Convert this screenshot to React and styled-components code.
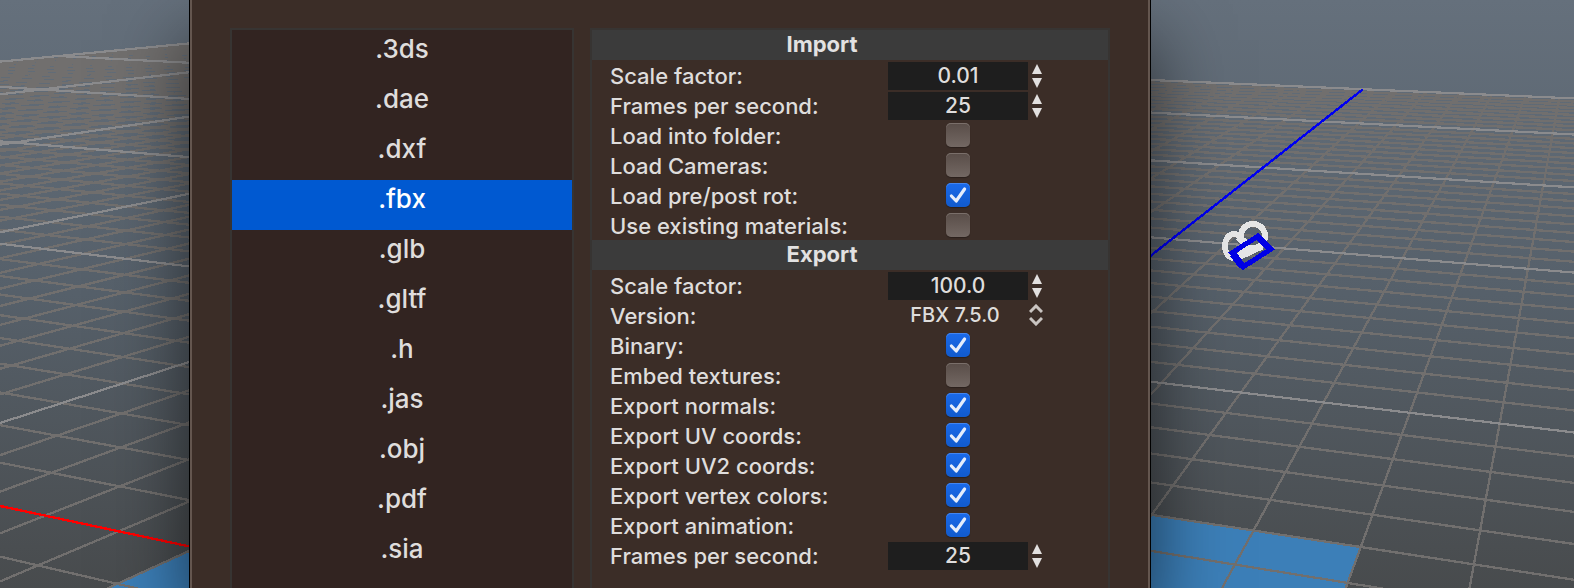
import styled, { createGlobalStyle } from "styled-components";
import { useState } from "react";

const GlobalStyle = createGlobalStyle`
  * {
    box-sizing: border-box;
  }
  body {
    margin: 0;
    background-color: #4a4d50;
    font-family: Inter, "Liberation Sans", sans-serif;
    font-weight: 500;
  }
`;

const Page = styled.div`
  position: relative;
  height: 100vh;
  overflow: hidden;
  display: grid;
  grid-template-columns: 189fr 962fr 423fr;
`;

const Viewport = styled.svg`
  position: absolute;
  inset: 0;
  width: 100%;
  height: 100%;
`;

const Window = styled.main`
  grid-column: 2;
  position: relative;
  min-height: 100vh;
  padding: 28px 40px 0px;
  display: grid;
  grid-template-columns: 344fr 520fr;
  gap: 16px;
  background-color: #3b2d27;
  border: solid #000;
  border-width: 0px 1px;
  box-shadow: inset 2px 0px #64564f, inset -2px 0px #64564f,
    0px 40px 72px 0px rgba(0, 0, 0, 0.6);
`;

const FormatList = styled.div`
  display: flex;
  flex-direction: column;
  background-color: #322421;
  border: 2px solid #373432;
  border-bottom: none;
`;

const Format = styled.button`
  height: 50px;
  padding: 0px 0px 12px;
  border: none;
  background-color: ${(props) => (props.$selected ? "#0059d1" : "transparent")};
  color: ${(props) => (props.$selected ? "#ffffff" : "#dfdddc")};
  font-family: inherit;
  font-size: 26px;
  font-weight: inherit;
  line-height: 38px;
  cursor: pointer;
`;

const Options = styled.form`
  border: 2px solid #373432;
  border-bottom: none;
`;

const Title = styled.h2`
  margin: 0px;
  padding: 0px 56px 2px 0px;
  background-color: #3b3b3b;
  color: #e2e1e1;
  font-size: 22px;
  font-weight: 700;
  line-height: 28px;
  text-align: center;
`;

const Row = styled.div`
  height: 30px;
  display: grid;
  grid-template-columns: 296fr 140fr 80fr;
  align-items: center;
`;

const Label = styled.label`
  padding: 2px 0px 0px 18px;
  color: #dfdddc;
  font-size: 22px;
  line-height: 28px;
  white-space: nowrap;
`;

const Input = styled.input`
  width: 100%;
  height: 28px;
  margin-top: 2px;
  padding: 0px 0px 2px;
  border: none;
  outline: none;
  background-color: #1e1e1e;
  color: #dfdddc;
  font-family: inherit;
  font-size: 21px;
  font-weight: inherit;
  text-align: center;
`;

const Select = styled.select`
  width: 100%;
  height: 28px;
  padding: 0px 6px 0px 0px;
  appearance: none;
  border: none;
  outline: none;
  background-color: transparent;
  color: #dfdddc;
  font-family: inherit;
  font-size: 20px;
  font-weight: inherit;
  text-align: center;
  text-align-last: center;
`;

const Stepper = styled.div`
  width: 10px;
  margin: 2px 0px 0px 4px;
  display: flex;
  flex-direction: column;
  gap: 4px;
`;

const Step = styled.button`
  height: 10px;
  padding: 0px;
  border: none;
  background: none;
  display: flex;
  cursor: pointer;
`;

const Chevrons = styled.svg`
  margin-left: 1px;
  pointer-events: none;
`;

const CheckBox = styled.span`
  position: relative;
  width: 24px;
  height: 24px;
  justify-self: center;
`;

const Check = styled.input`
  width: 24px;
  height: 24px;
  margin: 0px;
  display: block;
  appearance: none;
  border-radius: 5px;
  background: linear-gradient(#594d48, #736863);
  box-shadow: inset 0px 1px #7a6f6a, 0px 1px 1px rgba(0, 0, 0, 0.3);
  cursor: pointer;

  &:checked {
    background: linear-gradient(#1a6aea, #115acc);
    box-shadow: inset 0px 1px #4385ee, 0px 1px 1px rgba(0, 0, 0, 0.3);
  }
`;

const Tick = styled.svg`
  position: absolute;
  inset: 0;
  pointer-events: none;
`;

const formats = [
  ".3ds",
  ".dae",
  ".dxf",
  ".fbx",
  ".glb",
  ".gltf",
  ".h",
  ".jas",
  ".obj",
  ".pdf",
  ".sia",
];

const importOptions = [
  { label: "Scale factor:", type: "number", value: 0.01, digits: 2 },
  { label: "Frames per second:", type: "number", value: 25, digits: 0 },
  { label: "Load into folder:", type: "check" },
  { label: "Load Cameras:", type: "check" },
  { label: "Load pre/post rot:", type: "check", value: true },
  { label: "Use existing materials:", type: "check" },
];

const exportOptions = [
  { label: "Scale factor:", type: "number", value: 100, digits: 1 },
  { label: "Version:", type: "select", options: ["FBX 7.5.0"] },
  { label: "Binary:", type: "check", value: true },
  { label: "Embed textures:", type: "check" },
  { label: "Export normals:", type: "check", value: true },
  { label: "Export UV coords:", type: "check", value: true },
  { label: "Export UV2 coords:", type: "check", value: true },
  { label: "Export vertex colors:", type: "check", value: true },
  { label: "Export animation:", type: "check", value: true },
  { label: "Frames per second:", type: "number", value: 25, digits: 0 },
];

// two point perspective: both families of floor lines end on the horizon
const horizon = -92;
const leftVanish = -2800;
const rightVanish = 1594;

const across = (n) => 22.97 - 0.36575 * n;
const along = (n) => 10.375 - 0.182 * n;

const cross = (a, b) => {
  const depth = (rightVanish - leftVanish) / (across(a) + along(b));
  return [rightVanish - along(b) * depth, horizon + depth];
};

const acrossLine = (n) => {
  const [x, y] = cross(n, 0);
  return `M${x} ${y}L1700 ${horizon + (1700 - leftVanish) / across(n)}`;
};

const alongLine = (n) => {
  const [x, y] = cross(0, n);
  return `M${x} ${y}L${rightVanish - along(n) * 792} 700`;
};

const range = (count) => [...Array(count).keys()];
const minor = (n) => n % 10 !== 0;
const major = (n) => n % 10 === 0 && n !== 50;

const lines = (test) =>
  range(60).filter(test).map(acrossLine).join("") +
  range(58).filter(test).map(alongLine).join("");

const tile = [cross(45, 45), cross(45, 55), cross(55, 55), cross(55, 45)];

const Floor = () => (
  <Viewport viewBox="0 0 1574 588" preserveAspectRatio="xMidYMid slice">
    <defs>
      <linearGradient id="sky" x1="0" y1="0" x2="0" y2="1">
        <stop offset="0" stopColor="#65707c" />
        <stop offset="0.5" stopColor="#56606a" />
        <stop offset="1" stopColor="#484b4d" />
      </linearGradient>
    </defs>
    <rect width="1574" height="588" fill="url(#sky)" />
    <polygon points={tile.join(" ")} fill="#3c7fb8" />
    <g fill="none" shapeRendering="crispEdges">
      <path d={lines(minor)} stroke="#716f6e" strokeWidth="2.3" />
      <path d={lines(major)} stroke="#8b8b8d" strokeWidth="2.2" />
      <path d={acrossLine(50)} stroke="#ff0000" strokeWidth="2.4" />
      <path d={alongLine(50)} stroke="#0000f0" strokeWidth="2.4" />
    </g>
    <g fill="none" shapeRendering="crispEdges">
      <ellipse
        cx="1234"
        cy="246"
        rx="9"
        ry="12"
        stroke="#e6e6e6"
        strokeWidth="6"
      />
      <circle cx="1253" cy="236" r="12" stroke="#e6e6e6" strokeWidth="6" />
      <path
        d="M1238 237L1246 243M1236 258L1262 246"
        stroke="#e6e6e6"
        strokeWidth="7"
      />
      <path
        d="M1232 253L1258 236L1271 249L1243 267Z"
        stroke="#0000e6"
        strokeWidth="5"
      />
      <path d="M1233 254L1242 266M1259 238L1270 249" stroke="#0000e6" strokeWidth="7" />
    </g>
  </Viewport>
);

const NumberOption = ({ id, option }) => {
  const [value, setValue] = useState(option.value.toFixed(option.digits));

  const step = (sign) => {
    const size = option.digits === 2 ? 0.01 : 1;
    setValue((Number(value) + sign * size).toFixed(option.digits));
  };

  return (
    <>
      <Input id={id} value={value} onChange={(e) => setValue(e.target.value)} />
      <Stepper>
        <Step type="button" aria-label="Increase" onClick={() => step(1)}>
          <svg width="10" height="10">
            <path d="M5 0L10 10H0Z" fill="#e2e0df" />
          </svg>
        </Step>
        <Step type="button" aria-label="Decrease" onClick={() => step(-1)}>
          <svg width="10" height="10">
            <path d="M0 0H10L5 10Z" fill="#e2e0df" />
          </svg>
        </Step>
      </Stepper>
    </>
  );
};

const SelectOption = ({ id, option }) => (
  <>
    <Select id={id}>
      {option.options.map((name) => (
        <option key={name}>{name}</option>
      ))}
    </Select>
    <Chevrons width="14" height="22" viewBox="0 0 14 22">
      <path
        d="M1 8L7 2L13 8M1 14L7 20L13 14"
        fill="none"
        stroke="#c9c4c1"
        strokeWidth="3"
      />
    </Chevrons>
  </>
);

const CheckOption = ({ id, option }) => {
  const [checked, setChecked] = useState(Boolean(option.value));

  return (
    <CheckBox>
      <Check
        id={id}
        type="checkbox"
        checked={checked}
        onChange={(e) => setChecked(e.target.checked)}
      />
      {checked && (
        <Tick width="24" height="24" viewBox="0 0 24 24">
          <path
            d="M5.4 13L10.2 18L18.6 6"
            fill="none"
            stroke="#e6edfb"
            strokeWidth="3.2"
            strokeLinecap="round"
            strokeLinejoin="round"
          />
        </Tick>
      )}
    </CheckBox>
  );
};

const controls = {
  number: NumberOption,
  select: SelectOption,
  check: CheckOption,
};

const Section = ({ title, options }) => (
  <>
    <Title>{title}</Title>
    {options.map((option, index) => {
      const Control = controls[option.type];
      const id = `${title}-${index}`;
      return (
        <Row key={id}>
          <Label htmlFor={id}>{option.label}</Label>
          <Control id={id} option={option} />
        </Row>
      );
    })}
  </>
);

const App = () => {
  const [format, setFormat] = useState(".fbx");

  return (
    <Page>
      <GlobalStyle />
      <Floor />
      <Window>
        <FormatList>
          {formats.map((name) => (
            <Format
              key={name}
              $selected={name === format}
              onClick={() => setFormat(name)}
            >
              {name}
            </Format>
          ))}
        </FormatList>
        <Options>
          <Section title="Import" options={importOptions} />
          <Section title="Export" options={exportOptions} />
        </Options>
      </Window>
    </Page>
  );
};

export default App;
